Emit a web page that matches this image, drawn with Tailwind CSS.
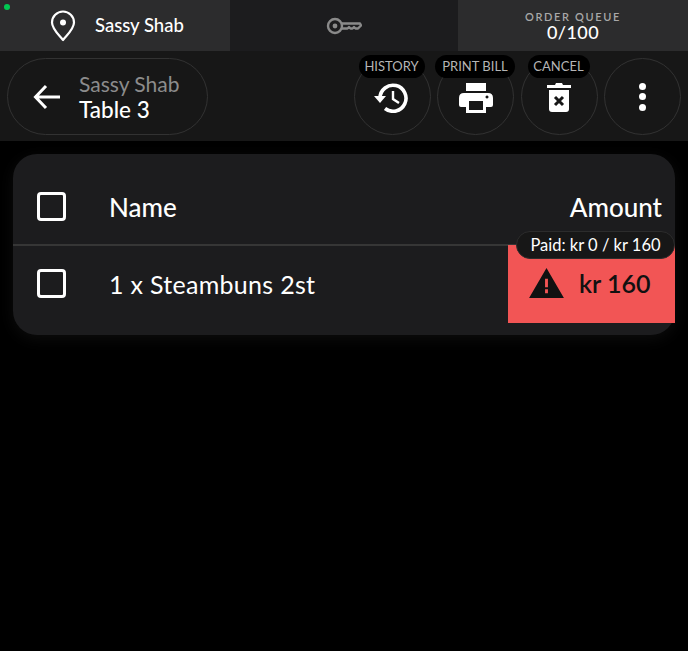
<!DOCTYPE html>
<html><head><meta charset="utf-8">
<script src="https://cdn.jsdelivr.net/npm/@tailwindcss/browser@4"></script>
</head>
<body class="bg-black font-['Lato','Liberation_Sans',sans-serif] text-white">
<div class="relative w-[688px] h-[651px] overflow-hidden bg-black">
  <div class="absolute left-[4px] top-[4px] w-[6px] h-[6px] rounded-full bg-green-500"></div>
  <header class="flex h-[51px] bg-[#1c1c1e]">
    <div class="w-[230px] flex items-center bg-[#2c2c2d] pl-[50px] gap-[19px]">
      <svg class="w-[26px] h-[32px]" viewBox="0 0 26 32" fill="none"><path d="M13 30 C9 25 2 19 2 12.5 A11 11 0 0 1 24 12.5 C24 19 17 25 13 30Z" stroke="white" stroke-width="2.2" stroke-linejoin="round"/><circle cx="13" cy="12.5" r="3" fill="white"/></svg>
      <span class="text-[18.5px] font-medium mt-[1px]">Sassy Shab</span>
    </div>
    <div class="w-[228px] flex items-center justify-center">
      <svg class="w-[36px] h-[18px]" viewBox="0 0 36 18" fill="none" stroke="#8a8a8a" stroke-width="2.4"><circle cx="9" cy="9" r="7"/><circle cx="9" cy="9" r="2.4" fill="#8a8a8a" stroke="none"/><path d="M16 6.5H34L35 8.5L32 11.5H29.5L28 10L26.5 11.5H24.5L23 10L21.5 11.5H16" stroke-linejoin="round"/></svg>
    </div>
    <div class="flex-1 flex flex-col items-center justify-center bg-[#2c2c2d] pt-[1px]">
      <span class="text-[11px] leading-[12px] font-semibold tracking-[1.65px] text-[#a8a8a8]">ORDER QUEUE</span>
      <span class="text-[18px] leading-[18px] font-medium tracking-[0.4px]">0/100</span>
    </div>
  </header>
  <nav class="flex items-center h-[90px] bg-[#171717] px-[7px] pt-[7px] pb-[6px]">
    <div class="flex items-center w-[201px] h-[77px] rounded-full border border-[#323232]">
      <svg class="w-[28px] h-[26px] ml-[25px]" viewBox="0 0 28 26" fill="none" stroke="white" stroke-width="3"><path d="M27 13H3M13 2L2.5 13L13 24"/></svg>
      <div class="ml-[18px] flex flex-col">
        <span class="text-[21px] leading-[26px] text-[#8c8c8c]">Sassy Shab</span>
        <span class="text-[22.5px] leading-[26px] font-medium">Table 3</span>
      </div>
    </div>
    <div class="ml-auto flex gap-[6.5px]">
      <div class="relative w-[77px] h-[77px] rounded-full border border-[#323232] flex items-center justify-center">
        <span class="absolute top-[-4px] left-[4px] h-[23px] w-[66px] text-center rounded-full bg-black text-[13px] leading-[23px] text-[#b5b5b5] whitespace-nowrap">HISTORY</span>
        <svg class="w-[36px] h-[30px] mt-[2px]" viewBox="0 0 36 30" fill="none"><path d="M6 15A13 13 0 1 1 11 25.5" stroke="white" stroke-width="3.6"/><path d="M0 13H12L6 20Z" fill="white"/><path d="M19 8V16L25 20" stroke="white" stroke-width="2.4"/></svg>
      </div>
      <div class="relative w-[77px] h-[77px] rounded-full border border-[#323232] flex items-center justify-center">
        <span class="absolute top-[-4px] left-[-3px] h-[23px] w-[80px] text-center rounded-full bg-black text-[13px] leading-[23px] text-[#b5b5b5] whitespace-nowrap">PRINT BILL</span>
        <svg class="w-[34px] h-[30px] mt-[2px]" viewBox="0 0 34 30"><path fill="white" d="M7 0H27V8H7Z"/><path fill="white" fill-rule="evenodd" d="M5 10H29Q34 10 34 15V22Q34 24 32 24H27V30H7V24H2Q0 24 0 22V15Q0 10 5 10ZM10 18V27H24V18ZM28 12.5a1.5 1.5 0 1 0 .01 0Z"/></svg>
      </div>
      <div class="relative w-[77px] h-[77px] rounded-full border border-[#323232] flex items-center justify-center">
        <span class="absolute top-[-4px] left-[6px] h-[23px] w-[62px] text-center rounded-full bg-black text-[13px] leading-[23px] text-[#b5b5b5] whitespace-nowrap">CANCEL</span>
        <svg class="w-[24px] h-[30px] mt-[1px]" viewBox="0 0 24 30"><path fill="white" d="M0 3H8L9 1H15L16 3H24V6H0Z"/><path fill="white" fill-rule="evenodd" d="M2 8H22V27Q22 30 19 30H5Q2 30 2 27Z"/><path d="M8 15L16 23M16 15L8 23" stroke="#171717" stroke-width="3"/></svg>
      </div>
      <div class="w-[77px] h-[77px] rounded-full border border-[#323232] flex flex-col items-center justify-center gap-[3.5px]">
        <span class="w-[7px] h-[7px] rounded-full bg-white"></span>
        <span class="w-[7px] h-[7px] rounded-full bg-white"></span>
        <span class="w-[7px] h-[7px] rounded-full bg-white"></span>
      </div>
    </div>
  </nav>
  <main class="mx-[13px] mt-[13px] h-[181px] rounded-[24px] bg-[#1c1c1e] shadow-[0_4px_16px_rgba(255,255,255,0.05)]">
    <div class="flex items-center h-[92px] border-b-2 border-[#363636] pl-[24px] pr-[13px] pt-[14px]">
      <span class="w-[29px] h-[29px] rounded-[4px] border-[3px] border-white"></span>
      <span class="ml-[43px] mt-[2px] text-[26px] font-medium">Name</span>
      <span class="ml-auto mt-[2px] text-[26px] font-medium">Amount</span>
    </div>
    <div class="flex items-center h-[77px] pl-[24px]">
      <span class="w-[29px] h-[29px] mb-[2px] rounded-[4px] border-[3px] border-white"></span>
      <span class="ml-[43px] text-[25px] tracking-[0.3px]">1 x Steambuns 2st</span>
      <div class="relative ml-auto self-start -mt-[1px] flex items-center h-[78px] w-[167px] bg-[#f25555] pl-[21px] gap-[15px] text-[#111]">
        <span class="absolute left-[8px] top-[-14px] h-[28px] w-[159px] rounded-full bg-[#171717] border border-[#2c2c2c] flex items-center justify-center text-[16.5px] text-white whitespace-nowrap">Paid: kr 0 / kr 160</span>
        <svg class="w-[35px] h-[30px] mb-[3px]" viewBox="0 0 36 31"><path fill="#111" fill-rule="evenodd" d="M18 0L36 31H0ZM16.5 11V20H19.5V11ZM16.5 22V26H19.5V22Z"/></svg>
        <span class="text-[25px] font-semibold">kr 160</span>
      </div>
    </div>
  </main>
</div>
</body></html>
